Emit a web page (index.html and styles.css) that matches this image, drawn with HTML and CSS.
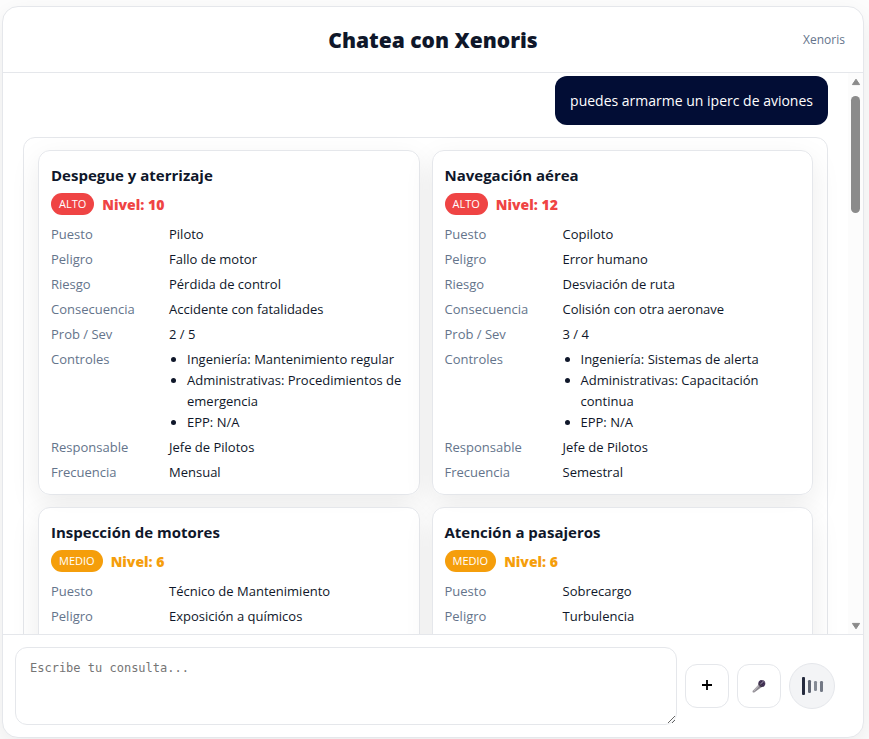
FILE: index.html
```html
<!DOCTYPE html>
<html lang="es">
<head>
<meta charset="utf-8">
<meta name="viewport" content="width=device-width, initial-scale=1">
<title>Chatea con Xenoris</title>
<link rel="stylesheet" href="styles.css">
</head>
<body>
<main class="panel">
  <header class="panel-header">
    <h1>Chatea con Xenoris</h1>
    <span class="brand">Xenoris</span>
  </header>

  <div class="chat">
    <div class="messages">
      <p class="bubble">puedes armarme un iperc de aviones</p>
      <section class="answer">
        <article class="card high">
          <h2>Despegue y aterrizaje</h2>
          <div class="level"><span class="badge">ALTO</span><strong>Nivel: 10</strong></div>
          <dl>
            <dt>Puesto</dt><dd>Piloto</dd>
            <dt>Peligro</dt><dd>Fallo de motor</dd>
            <dt>Riesgo</dt><dd>Pérdida de control</dd>
            <dt>Consecuencia</dt><dd>Accidente con fatalidades</dd>
            <dt>Prob / Sev</dt><dd>2 / 5</dd>
            <dt>Controles</dt>
            <dd><ul><li>Ingeniería: Mantenimiento regular</li><li>Administrativas: Procedimientos de emergencia</li><li>EPP: N/A</li></ul></dd>
            <dt>Responsable</dt><dd>Jefe de Pilotos</dd>
            <dt>Frecuencia</dt><dd>Mensual</dd>
          </dl>
        </article>
        <article class="card high">
          <h2>Navegación aérea</h2>
          <div class="level"><span class="badge">ALTO</span><strong>Nivel: 12</strong></div>
          <dl>
            <dt>Puesto</dt><dd>Copiloto</dd>
            <dt>Peligro</dt><dd>Error humano</dd>
            <dt>Riesgo</dt><dd>Desviación de ruta</dd>
            <dt>Consecuencia</dt><dd>Colisión con otra aeronave</dd>
            <dt>Prob / Sev</dt><dd>3 / 4</dd>
            <dt>Controles</dt>
            <dd><ul><li>Ingeniería: Sistemas de alerta</li><li>Administrativas: Capacitación continua</li><li>EPP: N/A</li></ul></dd>
            <dt>Responsable</dt><dd>Jefe de Pilotos</dd>
            <dt>Frecuencia</dt><dd>Semestral</dd>
          </dl>
        </article>
        <article class="card medium">
          <h2>Inspección de motores</h2>
          <div class="level"><span class="badge">MEDIO</span><strong>Nivel: 6</strong></div>
          <dl>
            <dt>Puesto</dt><dd>Técnico de Mantenimiento</dd>
            <dt>Peligro</dt><dd>Exposición a químicos</dd>
          </dl>
        </article>
        <article class="card medium">
          <h2>Atención a pasajeros</h2>
          <div class="level"><span class="badge">MEDIO</span><strong>Nivel: 6</strong></div>
          <dl>
            <dt>Puesto</dt><dd>Sobrecargo</dd>
            <dt>Peligro</dt><dd>Turbulencia</dd>
          </dl>
        </article>
      </section>
    </div>
    <div class="scrollbar" aria-hidden="true">
      <svg width="10" height="8" viewBox="0 0 10 8"><path d="M5 1.2 8.6 6.6H1.4Z" fill="#8b8b8b" stroke="#8b8b8b" stroke-linejoin="round"/></svg>
      <div class="track"><div class="thumb"></div></div>
      <svg width="10" height="8" viewBox="0 0 10 8"><path d="M5 6.8 8.6 1.4H1.4Z" fill="#8b8b8b" stroke="#8b8b8b" stroke-linejoin="round"/></svg>
    </div>
  </div>

  <form class="composer">
    <textarea aria-label="Consulta" placeholder="Escribe tu consulta..."></textarea>
    <button type="button" class="tool" aria-label="Adjuntar">
      <svg width="12" height="14" viewBox="0 0 12 14"><path d="M6 1v10M1 6h10" stroke="#000" stroke-width="1.8"/></svg>
    </button>
    <button type="button" class="tool" aria-label="Dictar">
      <svg width="16" height="16" viewBox="0 0 16 16">
        <path d="M8.2 5.9 1.6 13Q1.2 15 3.2 14.5L10.8 9Z" fill="#8c888f"/>
        <path d="M8.4 6.8 2.6 13.4" stroke="#bbb7bd" stroke-width="1.1"/>
        <circle cx="10.8" cy="5.6" r="3.5" fill="#594a69"/>
        <path d="M8.2 3.8 12.8 8.1M9.5 2.6l4.2 3.9" stroke="#36264b" stroke-width="1.2"/>
        <path d="M12.5 3.2 8.5 7.1" stroke="#9990a5" stroke-width="1"/>
        <path d="M7.7 5.5 10.9 8.8" stroke="#39323f" stroke-width="1.2"/>
      </svg>
    </button>
    <button type="button" class="voice" aria-label="Modo de voz">
      <svg width="24" height="20" viewBox="0 0 24 20">
        <rect x="2" y="1" width="3" height="18" rx="1" fill="#252b3e"/>
        <rect x="8" y="4" width="3" height="13" rx="1.2" fill="#626875"/>
        <rect x="14" y="5" width="3" height="10" rx="1.2" fill="#858b95"/>
        <rect x="20" y="5" width="3" height="11" rx="1.2" fill="#737985"/>
      </svg>
    </button>
  </form>
</main>
</body>
</html>
```
FILE: styles.css
```css
* { box-sizing: border-box; }

body {
  margin: 0;
  height: 100vh;
  padding: 6px 5px 1px 2px;
  background: #fdfdfd;
  color: #0f172a;
  font: 14px/21px "Open Sans", "Noto Sans", sans-serif;
  overflow: hidden;
}

h1, h2, p, dl, dd, ul { margin: 0; padding: 0; }

.panel {
  height: 100%;
  display: flex;
  flex-direction: column;
  background: #fff;
  border: 1px solid #e5e7eb;
  border-radius: 16px;
  box-shadow: 0 10px 30px rgba(0, 0, 0, .08);
  overflow: hidden;
}

.panel-header {
  display: grid;
  grid-template-columns: 1fr auto 1fr;
  align-items: center;
  height: 66px;
  flex: none;
  padding: 0 18px;
  border-bottom: 1px solid #e5e7eb;
}
.panel-header h1 {
  grid-column: 2;
  font-size: 21px;
  line-height: 32px;
  font-weight: 800;
}
.brand {
  justify-self: end;
  color: #64748b;
  font-size: 12px;
}

.chat {
  flex: 1;
  min-height: 0;
  display: flex;
}
.messages {
  flex: 1;
  min-width: 0;
  display: flex;
  flex-direction: column;
  gap: 12px;
  padding: 3px 20px 20px;
  overflow-y: auto;
  scrollbar-width: none;
}
.bubble {
  align-self: flex-end;
  flex: none;
  padding: 14px 15px;
  border-radius: 12px;
  background: #020d35;
  color: #fff;
}
.answer {
  flex: none;
  display: grid;
  grid-template-columns: repeat(2, minmax(0, 1fr));
  gap: 12px;
  padding: 12px 14px;
  border: 1px solid #e5e7eb;
  border-radius: 12px;
}
.card {
  min-height: 345px;
  padding: 12px 12px 11px;
  background: rgba(255, 255, 255, .85);
  border: 1px solid #e5e7eb;
  border-radius: 12px;
  box-shadow: 0 10px 30px rgba(0, 0, 0, .08);
}
.card h2 {
  font-size: 15px;
  line-height: 24px;
  font-weight: 700;
}
.level {
  display: flex;
  align-items: center;
  gap: 8px;
  margin: 6px 0 9px;
  height: 22px;
}
.badge {
  padding: 0 8px;
  border-radius: 11px;
  color: #fff;
  font-size: 11px;
  line-height: 22px;
}
.level strong {
  font-size: 14px;
  font-weight: 800;
}
.high .badge { background: #ef4444; }
.high strong { color: #ef4444; }
.medium .badge { background: #f59e0b; }
.medium strong { color: #f59e0b; }

.card dl {
  display: grid;
  grid-template-columns: 110px minmax(0, 1fr);
  gap: 4px 8px;
  font-size: 13px;
}
.card dt { color: #64748b; }
.card ul { padding-left: 18px; }

.scrollbar {
  flex: none;
  width: 15px;
  display: flex;
  flex-direction: column;
  align-items: center;
  gap: 8px;
  padding: 5px 0 4px;
  background: #fcfcfc;
}
.track { flex: 1; padding-top: 2px; }
.thumb {
  width: 9px;
  height: 22.5%;
  border-radius: 5px;
  background: #8b8b8b;
}

.composer {
  flex: none;
  display: flex;
  align-items: center;
  gap: 8px;
  padding: 12px 28px 12px 12px;
  border-top: 1px solid #e5e7eb;
}
.composer textarea {
  flex: 1;
  min-width: 0;
  height: 78px;
  padding: 12px 14px;
  border: 1px solid #e5e7eb;
  border-radius: 12px;
  background: #fff;
  color: #0f172a;
  font: 12px/16px "DejaVu Sans Mono", monospace;
  resize: vertical;
}
.composer textarea::placeholder { color: #757575; }
.composer button {
  display: grid;
  place-items: center;
  padding: 0;
  border: 1px solid #e5e7eb;
}
.tool {
  width: 44px;
  height: 44px;
  border-radius: 12px;
  background: #fff;
}
.voice {
  width: 46px;
  height: 46px;
  border-radius: 50%;
  background: #f3f4f6;
}
```
